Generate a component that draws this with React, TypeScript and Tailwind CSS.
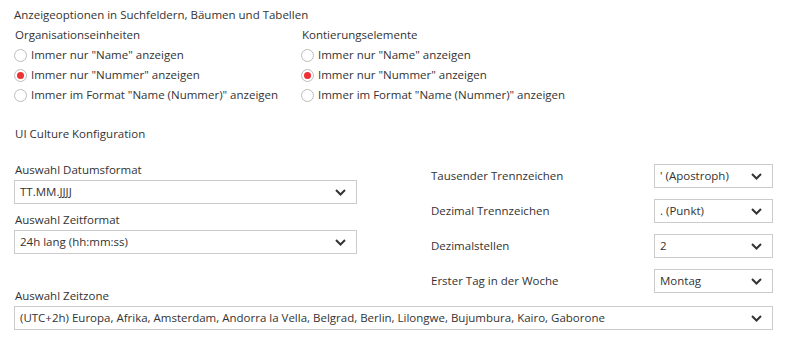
import { useState } from 'react';

const chevron = (
    <svg width="11" height="7" viewBox="0 0 11 7" className="shrink-0">
        <polyline points="1,1 5.5,5.5 10,1" fill="none" stroke="#333" strokeWidth="2" />
    </svg>
);

function Select({ value, className = '' }: { value: string; className?: string }) {
    return (
        <div className={`flex h-[24px] items-center justify-between border border-[#cbcbcb] bg-white pl-[5px] pr-[10px] ${className}`}>
            <span className="truncate">{value}</span>
            {chevron}
        </div>
    );
}

function RadioGroup({ title, options, selected, onSelect }: { title: string; options: string[]; selected: number; onSelect: (i: number) => void }) {
    return (
        <div>
            <div className="h-[20px] leading-[20px] pl-[1px]">{title}</div>
            {options.map((opt, i) => (
                <div key={opt} className="flex h-[20px] items-center gap-[4px] cursor-pointer" onClick={() => onSelect(i)}>
                    <span className="flex h-[13px] w-[13px] items-center justify-center rounded-full border border-[#bdbdbd] bg-white">
                        {selected === i && <span className="h-[7px] w-[7px] rounded-full bg-[#ef3035]"></span>}
                    </span>
                    <span className="leading-[20px]">{opt}</span>
                </div>
            ))}
        </div>
    );
}

const radioOptions = ['Immer nur "Name" anzeigen', 'Immer nur "Nummer" anzeigen', 'Immer im Format "Name (Nummer)" anzeigen'];

export default function App() {
    const [org, setOrg] = useState(1);
    const [kont, setKont] = useState(1);

    // rechte Spalte: Zahlenformat
    const numberRows = [
        { label: 'Tausender Trennzeichen', value: "' (Apostroph)" },
        { label: 'Dezimal Trennzeichen', value: '. (Punkt)' },
        { label: 'Dezimalstellen', value: '2' },
        { label: 'Erster Tag in der Woche', value: 'Montag' },
    ];

    return (
        <div className="min-h-screen w-[800px] bg-white px-[14px] pt-[5px] text-[11.5px] text-[#333] font-['Open_Sans','Noto_Sans',sans-serif]">
            <div className="h-[20px] leading-[20px]">Anzeigeoptionen in Suchfeldern, Bäumen und Tabellen</div>
            <div className="grid grid-cols-[287px_1fr]">
                <RadioGroup title="Organisationseinheiten" options={radioOptions} selected={org} onSelect={setOrg} />
                <RadioGroup title="Kontierungselemente" options={radioOptions} selected={kont} onSelect={setKont} />
            </div>

            <div className="mt-[19px] h-[20px] leading-[20px] pl-[1px]">UI Culture Konfiguration</div>

            <div className="mt-[17px] grid w-[759px] grid-cols-[343px_342px] gap-x-[74px]">
                <div>
                    <div className="h-[18px] leading-[18px] pl-[1px]">Auswahl Datumsformat</div>
                    <Select value="TT.MM.JJJJ" className="mt-[1px]" />
                    <div className="mt-[7px] h-[18px] leading-[18px] pl-[1px]">Auswahl Zeitformat</div>
                    <Select value="24h lang (hh:mm:ss)" className="mt-[1px]" />
                </div>
                <div className="flex flex-col gap-[11px] pt-[3px]">
                    {numberRows.map((r) => (
                        <div key={r.label} className="flex h-[24px] items-center justify-between">
                            <span>{r.label}</span>
                            <Select value={r.value} className="w-[119px] pr-[8px]" />
                        </div>
                    ))}
                </div>
            </div>

            <div className="-mt-[4px] h-[14px] leading-[14px] pl-[1px]">Auswahl Zeitzone</div>
            <Select
                value="(UTC+2h) Europa, Afrika, Amsterdam, Andorra la Vella, Belgrad, Berlin, Lilongwe, Bujumbura, Kairo, Gaborone"
                className="mt-[3px] w-[759px]"
            />
        </div>
    );
}
